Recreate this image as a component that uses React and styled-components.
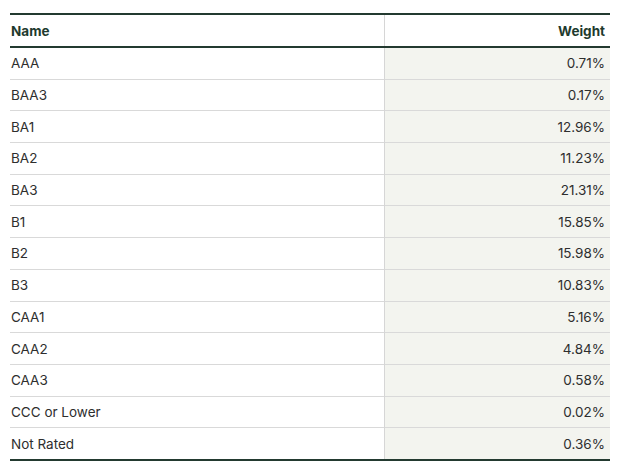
import React from "react";
import styled, { createGlobalStyle } from "styled-components";

const rows = [
    ["AAA", "0.71%"],
    ["BAA3", "0.17%"],
    ["BA1", "12.96%"],
    ["BA2", "11.23%"],
    ["BA3", "21.31%"],
    ["B1", "15.85%"],
    ["B2", "15.98%"],
    ["B3", "10.83%"],
    ["CAA1", "5.16%"],
    ["CAA2", "4.84%"],
    ["CAA3", "0.58%"],
    ["CCC or Lower", "0.02%"],
    ["Not Rated", "0.36%"],
];

const Global = createGlobalStyle`
    body {
        margin: 0;
        background: #ffffff;
        font-family: Inter, "Liberation Sans", sans-serif;
    }
`;

const Page = styled.div`
    padding: 13px 15px 0 10px;
`;

const Table = styled.table`
    width: 600px;
    border-collapse: collapse;
    border-top: 2px solid #233a30;
    border-bottom: 2px solid #233a30;
    font-size: 13.5px;
    color: #2e2e2e;
`;

const Head = styled.th`
    height: 31px;
    padding: 0 ${(p) => (p.$right ? "5px" : "0")} 0 ${(p) => (p.$right ? "0" : "1px")};
    text-align: ${(p) => (p.$right ? "right" : "left")};
    font-weight: 700;
    color: #1e3a2e;
    border-bottom: 2px solid #233a30;
    border-left: ${(p) => (p.$right ? "1px solid #d6d6d6" : "none")};
    width: ${(p) => (p.$right ? "220px" : "auto")};
`;

const Row = styled.tr`
    & + & td {
        border-top: 1px solid #d9d9d9;
    }
`;

const Cell = styled.td`
    height: 30.7px;
    padding: 0 ${(p) => (p.$right ? "5px" : "0")} 0 ${(p) => (p.$right ? "0" : "1px")};
    text-align: ${(p) => (p.$right ? "right" : "left")};
    background: ${(p) => (p.$right ? "#f3f4ef" : "transparent")};
    border-left: ${(p) => (p.$right ? "1px solid #d6d6d6" : "none")};
`;

export default function App() {
    return (
        <Page>
            <Global />
            <Table>
                <thead>
                    <tr>
                        <Head>Name</Head>
                        <Head $right>Weight</Head>
                    </tr>
                </thead>
                <tbody>
                    {rows.map(([name, weight]) => (
                        <Row key={name}>
                            <Cell>{name}</Cell>
                            <Cell $right>{weight}</Cell>
                        </Row>
                    ))}
                </tbody>
            </Table>
        </Page>
    );
}
